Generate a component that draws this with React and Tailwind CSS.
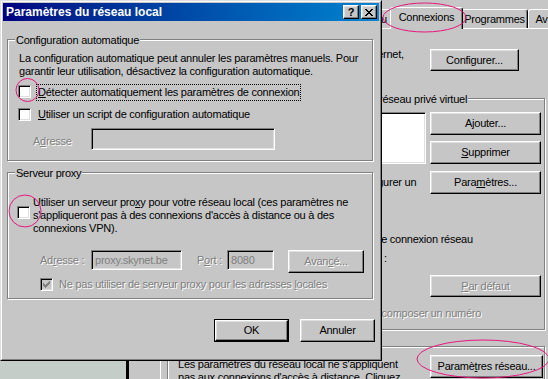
import React from "react";

const dim = "text-[#808080] [text-shadow:1px_1px_0_#ffffff]";

const U = ({ children }) => <span className="underline underline-offset-[1px]">{children}</span>;

function Button({ children, className = "", disabled = false, isDefault = false }) {
  const face = (
    <div
      className={`flex h-full w-full items-center justify-center border border-t-white border-l-white border-r-black border-b-black bg-[#c6c6c6] shadow-[inset_-1px_-1px_0_#808080,inset_1px_1px_0_#dfdfdf] ${
        disabled ? dim : ""
      }`}
    >
      <span>{children}</span>
    </div>
  );
  if (isDefault) return <div className={`border border-black ${className}`}>{face}</div>;
  return <div className={className}>{face}</div>;
}

function Check({ checked = false, disabled = false, className = "" }) {
  return (
    <span
      className={`relative block h-[13px] w-[13px] shrink-0 border border-t-[#808080] border-l-[#808080] border-r-white border-b-white shadow-[inset_1px_1px_0_#000,inset_-1px_-1px_0_#dfdfdf] ${
        disabled ? "bg-[#c6c6c6]" : "bg-white"
      } ${className}`}
    >
      {checked && (
        <svg className="absolute left-[2px] top-[2px]" width="7" height="7" viewBox="0 0 7 7" shapeRendering="crispEdges">
          <path
            fill={disabled ? "#808080" : "#000"}
            d="M6 0h1v1h-1z M5 1h2v1h-2z M0 2h1v1h-1z M4 2h3v1h-3z M0 3h2v1h-2z M3 3h3v1h-3z M0 4h5v1h-5z M1 5h3v1h-3z M2 6h1v1h-1z"
          />
        </svg>
      )}
    </span>
  );
}

function Radio({ className = "" }) {
  return (
    <svg className={`shrink-0 ${className}`} width="12" height="12" viewBox="0 0 12 12">
      <circle cx="6" cy="6" r="5.5" fill="#fff" stroke="#808080" />
    </svg>
  );
}

function Field({ value = "", className = "", white = false }) {
  return (
    <div
      className={`flex items-center border border-t-[#808080] border-l-[#808080] border-r-white border-b-white pl-[3px] text-[#808080] shadow-[inset_1px_1px_0_#000,inset_-1px_-1px_0_#dfdfdf] ${
        white ? "bg-white" : "bg-[#c6c6c6]"
      } ${className}`}
    >
      {value}
    </div>
  );
}

function Group({ label, labelClass = "left-[7px]", className = "", children }) {
  return (
    <div className={`relative border border-[#808080] shadow-[inset_1px_1px_0_#fff,1px_1px_0_#fff] ${className}`}>
      {label && <span className={`absolute -top-[6px] bg-[#c6c6c6] px-px ${labelClass}`}>{label}</span>}
      {children}
    </div>
  );
}

function TitleButton({ children, className = "" }) {
  return (
    <div
      className={`flex h-[14px] w-[16px] items-center justify-center border border-t-white border-l-white border-r-black border-b-black bg-[#c6c6c6] shadow-[inset_-1px_-1px_0_#808080,inset_1px_1px_0_#dfdfdf] ${className}`}
    >
      {children}
    </div>
  );
}

function Dialog() {
  return (
    <div className="absolute left-0 top-0 z-10 h-[361px] w-[382px] border border-t-[#dfdfdf] border-l-[#dfdfdf] border-r-black border-b-black bg-[#c6c6c6]">
      <div className="h-full border border-t-white border-l-white border-r-[#808080] border-b-[#808080] p-px">
        {/* title bar */}
        <div className="flex h-[18px] items-center bg-linear-to-r from-[#000080] to-[#1084d0] pl-[3px] pr-[2px]">
          <span className="flex-1 text-[12px] font-bold tracking-[0px] text-white">Paramètres du réseau local</span>
          <TitleButton className="mr-[2px]">
            <span className="text-[11px] font-bold leading-[11px]">?</span>
          </TitleButton>
          <TitleButton>
            <svg width="8" height="7" viewBox="0 0 8 7" shapeRendering="crispEdges">
              <path d="M0 0h2v1h-2z M6 0h2v1h-2z M1 1h2v1h-2z M5 1h2v1h-2z M2 2h4v1h-4z M3 3h2v1h-2z M2 4h4v1h-4z M1 5h2v1h-2z M5 5h2v1h-2z M0 6h2v1h-2z M6 6h2v1h-2z" />
            </svg>
          </TitleButton>
        </div>

        <Group label="Configuration automatique" className="ml-[4px] mt-[18px] h-[122px] w-[366px]">
          <p className="whitespace-nowrap pl-[11px] pt-[12px]">
            La configuration automatique peut annuler les paramètres manuels. Pour
            <br />
            garantir leur utilisation, désactivez la configuration automatique.
          </p>
          <div className="mt-[6px] flex items-start pl-[10px]">
            <Check className="mt-px" />
            <span className="ml-[5px] whitespace-nowrap border border-dotted border-black px-px py-px">
              <U>D</U>étecter automatiquement les paramètres de connexion
            </span>
          </div>
          <div className="mt-[7px] flex items-start pl-[10px]">
            <Check />
            <span className="ml-[7px] whitespace-nowrap">
              <U>U</U>tiliser un script de configuration automatique
            </span>
          </div>
          <div className="mt-[7px] flex items-start pl-[25px]">
            <span className={`w-[58px] pt-[7px] ${dim}`}>
              A<U>d</U>resse
            </span>
            <Field className="h-[22px] w-[184px]" />
          </div>
        </Group>

        <Group label="Serveur proxy" className="ml-[4px] mt-[11px] h-[127px] w-[366px]">
          <div className="flex items-start pl-[9px] pt-[23px]">
            <Check className="mt-[10px]" />
            <p className="ml-[3px] whitespace-nowrap">
              Utiliser un serveur pro<U>x</U>y pour votre réseau local (ces paramètres ne
              <br />
              s'appliqueront pas à des connexions d'accès à distance ou à des
              <br />
              connexions VPN).
            </p>
          </div>
          <div className="mt-[15px] flex items-start pl-[32px]">
            <span className={`w-[51px] whitespace-nowrap pt-[4px] ${dim}`}>
              Ad<U>r</U>esse :
            </span>
            <Field value="proxy.skynet.be" className="h-[20px] w-[91px]" />
            <span className={`ml-[15px] w-[30px] whitespace-nowrap pt-[4px] ${dim}`}>
              P<U>o</U>rt :
            </span>
            <Field value="8080" className="h-[20px] w-[47px]" />
            <Button disabled className="ml-[14px] h-[23px] w-[76px]">
              Avan<U>c</U>é...
            </Button>
          </div>
          <div className="mt-[5px] flex items-start pl-[32px]">
            <Check checked disabled />
            <span className={`ml-[6px] whitespace-nowrap ${dim}`}>
              Ne pas utiliser de serveur proxy pour les adresses <U>l</U>ocales
            </span>
          </div>
        </Group>

        <div className="mt-[20px] flex justify-end gap-[11px] pr-[4px]">
          <Button isDefault className="h-[23px] w-[75px]">
            OK
          </Button>
          <Button className="h-[23px] w-[75px]">Annuler</Button>
        </div>
      </div>
    </div>
  );
}

function Tab({ label, selected = false, className = "" }) {
  return (
    <div
      className={`flex shrink-0 items-center justify-center rounded-t-[3px] border border-b-0 border-t-white border-l-white border-r-black bg-[#c6c6c6] shadow-[inset_-1px_0_0_#808080] ${
        selected ? "relative z-10 -mx-[2px] -mb-px h-[22px] pb-[3px]" : "h-[19px]"
      } ${className}`}
    >
      {label}
    </div>
  );
}

function BackWindow() {
  return (
    <div className="absolute left-[126px] top-0 h-[379px] w-[440px] border-l-[3px] border-black bg-[#c6c6c6] pl-[31px]">
      {/* tabs */}
      <div className="flex h-[28px] items-end whitespace-nowrap">
        <Tab label="Général" className="w-[50px]" />
        <Tab label="Sécurité" className="w-[54px]" />
        <Tab label="Confidentialité" className="w-[78px]" />
        <Tab label="Contenu" className="w-[50px]" />
        <Tab label="Connexions" selected className="w-[73px]" />
        <Tab label="Programmes" className="w-[67px]" />
        <Tab label="Avancé" className="w-[50px]" />
      </div>

      <div className="h-[360px] border-l border-t border-white pl-[6px]">
        <div className="mt-[20px] flex">
          <p className="-mt-px w-[263px] whitespace-nowrap pl-[53px]">
            Pour configurer une connexion Internet,
            <br />
            cliquez sur Configurer.
          </p>
          <Button className="h-[22px] w-[89px]">Configurer...</Button>
        </div>

        <Group
          label="Paramètres d'accès à distance et de réseau privé virtuel"
          labelClass="left-[38px] whitespace-nowrap"
          className="mt-[24px] h-[232px] w-[378px]"
        >
          <div className="mt-[13px] flex">
            <Field white className="ml-[8px] h-[52px] w-[250px]" />
            <div className="ml-[4px] flex w-[111px] flex-col gap-[6px]">
              <Button className="h-[23px]">
                A<U>j</U>outer...
              </Button>
              <Button className="h-[23px]">
                <U>S</U>upprimer
              </Button>
            </div>
          </div>
          <div className="mt-[7px] flex">
            <p className="ml-[10px] w-[252px] whitespace-nowrap pt-[5px]">
              Choisissez Paramètres si vous devez configurer un
              <br />
              serveur proxy pour une connexion.
            </p>
            <Button className="h-[23px] w-[111px]">
              Para<U>m</U>ètres...
            </Button>
          </div>
          <div className="ml-[10px] mt-[12px] flex flex-col gap-[6px] whitespace-nowrap">
            <div className="flex items-center gap-[6px]">
              <Radio />
              <span>Ne jamais établir de connexion</span>
            </div>
            <div className="flex items-center gap-[6px] pl-[17px]">
              <Radio />
              <span>Établir une connexion s'il n'y a pas de connexion réseau</span>
            </div>
            <div className="flex items-center gap-[6px] pl-[148px]">
              <Radio />
              <span>Actuelle :</span>
            </div>
          </div>
          <div className="mt-[10px] flex">
            <span className="ml-[10px] w-[252px] whitespace-nowrap">Aucune</span>
            <Button disabled className="h-[22px] w-[111px]">
              <U>P</U>ar défaut
            </Button>
          </div>
          <div className="ml-[19px] mt-[10px] flex items-center gap-[6px] whitespace-nowrap">
            <Check disabled />
            <span className={dim}>Vérifier la connexion réseau avant de composer un numéro</span>
          </div>
        </Group>

        <Group label="Paramètres du réseau local" className="mt-[16px] h-[60px] w-[378px]">
          <div className="mt-[4px] flex">
            <p className="ml-[10px] w-[252px] whitespace-nowrap pt-[7px]">
              Les paramètres du réseau local ne s'appliquent
              <br />
              pas aux connexions d'accès à distance. Cliquez
            </p>
            <Button className="mt-[4px] h-[23px] w-[113px]">
              Paramè<U>t</U>res réseau...
            </Button>
          </div>
        </Group>
      </div>
    </div>
  );
}

function Marks() {
  return (
    <svg className="pointer-events-none absolute left-0 top-0 z-20" width="548" height="379" viewBox="0 0 548 379">
      <g fill="none" stroke="#e6177e" strokeWidth="1">
        <ellipse cx="424.5" cy="17.5" rx="41.5" ry="14.5" />
        <ellipse cx="483" cy="359" rx="66" ry="19" />
        <circle cx="27.5" cy="90" r="11.5" />
        <circle cx="25" cy="211" r="16" />
      </g>
    </svg>
  );
}

export default function App() {
  return (
    <div className="relative h-[379px] w-[548px] overflow-hidden bg-[#c5cdc9] font-['Liberation_Sans',Arial,sans-serif] text-[11px] leading-[13px] tracking-[-0.24px] text-black">
      <BackWindow />
      <Dialog />
      <Marks />
    </div>
  );
}
